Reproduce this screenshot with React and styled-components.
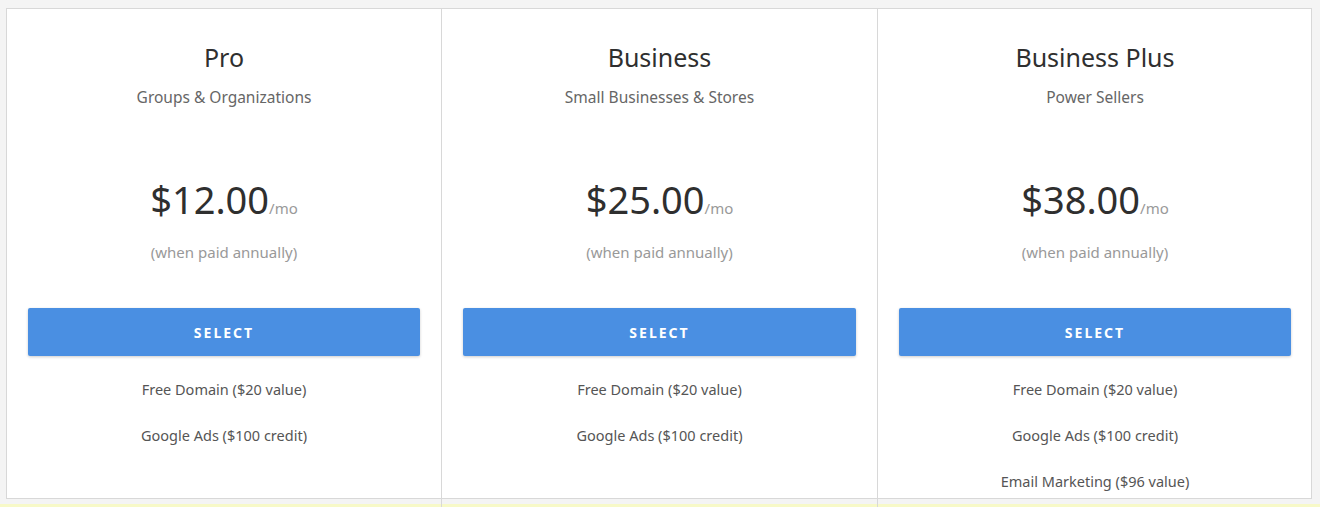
import React from "react";
import styled, { createGlobalStyle } from "styled-components";

const Global = createGlobalStyle`
  body {
    margin: 0;
    background: #f4f4f4;
    font-family: "Noto Sans", "Open Sans", sans-serif;
  }
`;

const Page = styled.div`
  height: 507px;
  padding: 8px 8px 0 6px;
  box-sizing: border-box;
  border-bottom: 3px solid #f7f9c8;
`;

const Plans = styled.div`
  display: grid;
  grid-template-columns: 434px 436px 435px;
  background: #fff;
  border: 1px solid #d8d8d8;
  height: 491px;
  box-sizing: border-box;
`;

const Plan = styled.div`
  display: flex;
  flex-direction: column;
  align-items: center;
  padding: 0 21px;
  border-left: ${(p) => (p.first ? "none" : "1px solid #d8d8d8")};
  text-align: center;
`;

const Title = styled.h2`
  margin: 30px 0 0;
  font-size: 25px;
  font-weight: 400;
  color: #2f2f2f;
  line-height: 36px;
`;

const Subtitle = styled.div`
  margin-top: 11px;
  font-size: 15.5px;
  color: #666;
  line-height: 22px;
`;

const Price = styled.div`
  margin-top: 66px;
  font-size: 38px;
  color: #2f2f2f;
  line-height: 50px;
  span {
    font-size: 15px;
    color: #999;
  }
`;

const Note = styled.div`
  margin-top: 8px;
  font-size: 15px;
  color: #999;
  line-height: 22px;
`;

const Button = styled.button`
  margin-top: 45px;
  width: 100%;
  height: 48px;
  background: #4a8fe2;
  border: none;
  border-radius: 2px;
  box-shadow: 0 1px 3px rgba(0, 0, 0, 0.2);
  color: #fff;
  font-family: inherit;
  font-size: 14px;
  font-weight: 700;
  letter-spacing: 2px;
`;

const Features = styled.ul`
  list-style: none;
  margin: 22px 0 0;
  padding: 0;
  li {
    font-size: 14.5px;
    color: #555;
    line-height: 22px;
    margin-bottom: 24px;
  }
`;

const plans = [
  { name: "Pro", sub: "Groups & Organizations", price: "$12.00", features: ["Free Domain ($20 value)", "Google Ads ($100 credit)"] },
  { name: "Business", sub: "Small Businesses & Stores", price: "$25.00", features: ["Free Domain ($20 value)", "Google Ads ($100 credit)"] },
  {
    name: "Business Plus",
    sub: "Power Sellers",
    price: "$38.00",
    features: ["Free Domain ($20 value)", "Google Ads ($100 credit)", "Email Marketing ($96 value)"],
  },
];

export default function App() {
  return (
    <Page>
      <Global />
      <Plans>
        {plans.map((p, i) => (
          <Plan key={p.name} first={i === 0}>
            <Title>{p.name}</Title>
            <Subtitle>{p.sub}</Subtitle>
            <Price>
              {p.price}
              <span>/mo</span>
            </Price>
            <Note>(when paid annually)</Note>
            <Button>SELECT</Button>
            <Features>
              {p.features.map((f) => (
                <li key={f}>{f}</li>
              ))}
            </Features>
          </Plan>
        ))}
      </Plans>
    </Page>
  );
}
